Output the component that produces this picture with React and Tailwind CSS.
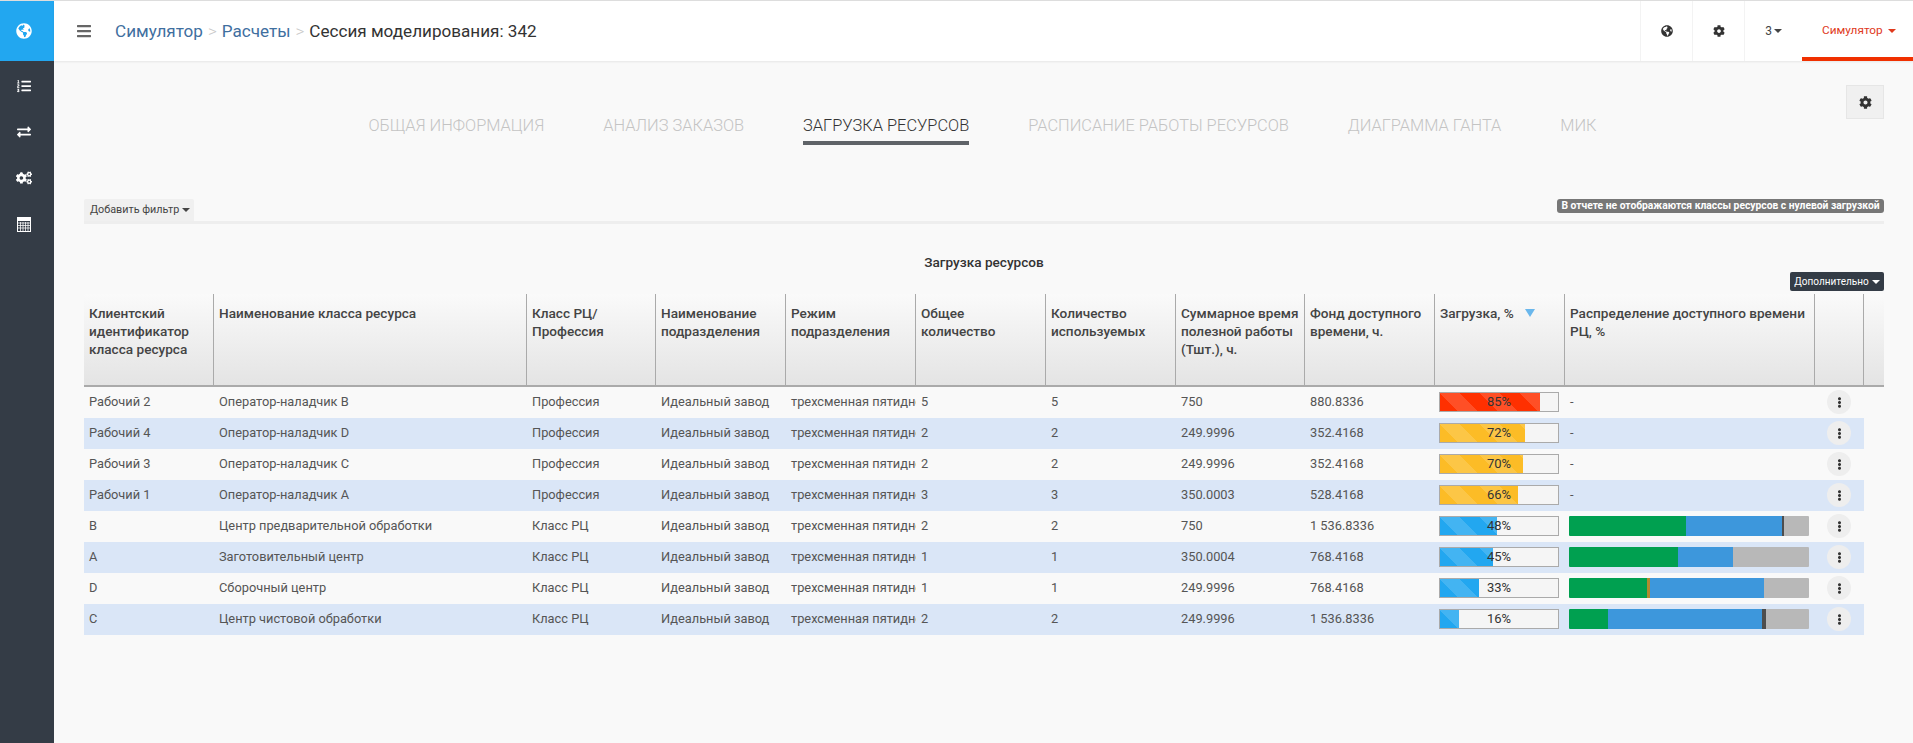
import React from 'react';
import {
  FaGlobeAmericas,
  FaListOl,
  FaExchangeAlt,
  FaCogs,
  FaCog,
  FaBars,
  FaEllipsisV,
} from 'react-icons/fa';

const tabs = [
  'ОБЩАЯ ИНФОРМАЦИЯ',
  'АНАЛИЗ ЗАКАЗОВ',
  'ЗАГРУЗКА РЕСУРСОВ',
  'РАСПИСАНИЕ РАБОТЫ РЕСУРСОВ',
  'ДИАГРАММА ГАНТА',
  'МИК',
];

const GREEN = '#00a050';
const BLUE = '#3d97dc';
const GRAY = '#b8b8b8';
const DARK = '#4d4d4d';
const ORANGE = '#b08a30';

const rows = [
  { id: 'Рабочий 2', name: 'Оператор-наладчик B', type: 'Профессия', qty: '5', used: '5', time: '750', fund: '880.8336', load: 85, color: 'bg-[#ff3000]' },
  { id: 'Рабочий 4', name: 'Оператор-наладчик D', type: 'Профессия', qty: '2', used: '2', time: '249.9996', fund: '352.4168', load: 72, color: 'bg-[#fcbc26]' },
  { id: 'Рабочий 3', name: 'Оператор-наладчик C', type: 'Профессия', qty: '2', used: '2', time: '249.9996', fund: '352.4168', load: 70, color: 'bg-[#fcbc26]' },
  { id: 'Рабочий 1', name: 'Оператор-наладчик A', type: 'Профессия', qty: '3', used: '3', time: '350.0003', fund: '528.4168', load: 66, color: 'bg-[#fcbc26]' },
  {
    id: 'B', name: 'Центр предварительной обработки', type: 'Класс РЦ', qty: '2', used: '2', time: '750', fund: '1 536.8336', load: 48, color: 'bg-[#22a7f0]',
    dist: [[117, GREEN], [96, BLUE], [2, DARK], [25, GRAY]],
  },
  {
    id: 'A', name: 'Заготовительный центр', type: 'Класс РЦ', qty: '1', used: '1', time: '350.0004', fund: '768.4168', load: 45, color: 'bg-[#22a7f0]',
    dist: [[109, GREEN], [55, BLUE], [76, GRAY]],
  },
  {
    id: 'D', name: 'Сборочный центр', type: 'Класс РЦ', qty: '1', used: '1', time: '249.9996', fund: '768.4168', load: 33, color: 'bg-[#22a7f0]',
    dist: [[78, GREEN], [3, ORANGE], [114, BLUE], [45, GRAY]],
  },
  {
    id: 'C', name: 'Центр чистовой обработки', type: 'Класс РЦ', qty: '2', used: '2', time: '249.9996', fund: '1 536.8336', load: 16, color: 'bg-[#22a7f0]',
    dist: [[39, GREEN], [154, BLUE], [4, DARK], [43, GRAY]],
  },
];

function Caret({ className = '' }) {
  return <span className={`inline-block shrink-0 w-0 h-0 border-x-4 border-t-4 border-x-transparent border-t-current ${className}`} />;
}

// outlined calculator, the solid one from the icon pack looks different
function CalculatorIcon() {
  return (
    <svg width="14" height="15" viewBox="0 0 14 15" fill="none">
      <rect x="0.5" y="0.5" width="13" height="14" stroke="#fff" />
      <rect x="1" y="1" width="12" height="3" fill="#fff" />
      <path d="M1 6h12M1 8.5h12M1 11h12M3.5 5v9M6 5v9M8.5 5v9M11 5v9" stroke="#fff" strokeWidth="1" strokeOpacity="0.75" />
    </svg>
  );
}

function LoadBar({ value, color }) {
  return (
    <div className="relative h-5 w-[120px] ml-[4px] border border-[#aaaaaa] bg-[#f5f5f5]">
      <div
        className={`h-full ${color} bg-[linear-gradient(45deg,rgba(255,255,255,.15)_25%,transparent_25%,transparent_50%,rgba(255,255,255,.15)_50%,rgba(255,255,255,.15)_75%,transparent_75%,transparent)] bg-[length:40px_40px]`}
        style={{ width: `${value}%` }}
      />
      <span className="absolute inset-0 flex items-center justify-center text-[13px] text-[#333333]">{value}%</span>
    </div>
  );
}

function DistBar({ parts }) {
  return (
    <div className="flex h-5 w-[240px] ml-[4px] overflow-hidden rounded-[1px]">
      {parts.map(([w, c], i) => (
        <div key={i} style={{ width: w, backgroundColor: c }} />
      ))}
    </div>
  );
}

function Th({ children }) {
  return (
    <th className="pl-[5px] pr-1 pt-[10px] align-top text-left text-[13.6px] leading-[18px] font-medium text-[#444444] border-r border-b-2 border-r-[#aaaaaa] border-b-[#aaaaaa] bg-gradient-to-b from-[#fafafa] to-[#e4e4e4]">
      {children}
    </th>
  );
}

function Td({ children, className = '' }) {
  return <td className={`pl-[5px] pb-px overflow-hidden whitespace-nowrap text-[12.8px] text-[#555555] ${className}`}>{children}</td>;
}

export default function App() {
  return (
    <div className="flex h-screen overflow-hidden border-t border-[#dddddd] bg-[#f9f9f9] font-['Roboto',sans-serif]">
      <aside className="w-[54px] shrink-0 flex flex-col bg-[#343c46] text-white">
        <div className="h-[60px] bg-[#22a7f0] flex items-center pl-4">
          <FaGlobeAmericas size={16} />
        </div>
        <nav className="flex flex-col pt-[2px] pl-[17px]">
          <a className="h-[46px] flex items-center"><FaListOl size={14} /></a>
          <a className="h-[46px] flex items-center"><FaExchangeAlt size={14} /></a>
          <a className="h-[46px] flex items-center -ml-px"><FaCogs size={16} /></a>
          <a className="h-[46px] flex items-center"><CalculatorIcon /></a>
        </nav>
      </aside>

      <div className="flex-1 min-w-0 flex flex-col">
        <header className="h-[60px] shrink-0 flex items-center bg-white shadow-[0_1px_2px_rgba(0,0,0,0.08)]">
          <button className="ml-[22px] text-[#666666]" aria-label="Меню">
            <FaBars size={16} />
          </button>
          <div className="ml-[23px] pt-[2px] flex items-center gap-[5px] text-[17.1px] text-[#333333]">
            <a className="text-[#3f6f9f]">Симулятор</a>
            <span className="text-[#c8c8c8] font-light">&gt;</span>
            <a className="text-[#3f6f9f]">Расчеты</a>
            <span className="text-[#c8c8c8] font-light">&gt;</span>
            <span>Сессия моделирования: 342</span>
          </div>
          <div className="ml-auto flex h-full text-[12px] text-[#444444]">
            <div className="w-[52px] flex items-center justify-center border-l border-[#f3f3f3]"><FaGlobeAmericas size={12} className="text-[#333333]" /></div>
            <div className="w-[52px] flex items-center justify-center border-l border-[#f3f3f3]"><FaCog size={12} className="text-[#333333]" /></div>
            <div className="w-[58px] flex items-center justify-center gap-[2px] border-l border-[#f3f3f3]">3<Caret /></div>
            <div className="w-[111px] flex items-center pl-[20px] pt-[4px] gap-[5px] border-b-4 border-b-[#f03000] text-[11.8px] text-[#e0391c]">
              Симулятор<Caret />
            </div>
          </div>
        </header>

        <main className="flex-1 pl-[30px] pr-[29px] pt-[24px]">
          <div className="flex justify-end">
            <button className="w-[38px] h-[34px] flex items-center justify-center bg-[#f0f0f0] border border-[#e6e6e6] text-[#333333]" aria-label="Настройки">
              <FaCog size={13} />
            </button>
          </div>

          <div className="flex justify-center gap-[59px] pr-[3px]">
            {tabs.map((t) => (
              <a
                key={t}
                className={`text-[16.4px] leading-[14px] font-light pb-[8px] border-b-4 ${t === 'ЗАГРУЗКА РЕСУРСОВ' ? 'text-[#333333] border-[#5f6368]' : 'text-[#c4c4c4] border-transparent'}`}
              >
                {t}
              </a>
            ))}
          </div>

          <div className="mt-[54px] flex justify-between items-start h-[25px] border-b-[3px] border-[#eeeeee]">
            <button className="h-[22px] w-[110px] flex items-center pl-[6px] gap-[3px] bg-[#f0f0f0] rounded-t-[2px] text-[10.8px] text-[#444444] whitespace-nowrap">
              Добавить фильтр<Caret />
            </button>
            <span className="h-[14px] w-[327px] flex items-center justify-center rounded-[3px] bg-[#777777] text-[10.3px] font-bold text-white whitespace-nowrap">
              В отчете не отображаются классы ресурсов с нулевой загрузкой
            </span>
          </div>

          <h2 className="mt-[29px] text-center text-[13.6px] leading-[18px] font-medium text-[#333333]">Загрузка ресурсов</h2>

          <div className="mt-[1px] mb-[3px] flex justify-end">
            <button className="h-[19px] w-[94px] flex items-center justify-center gap-[3px] rounded-[2px] bg-[#343c46] text-[10px] text-white whitespace-nowrap">
              Дополнительно<Caret />
            </button>
          </div>

          <table className="table-fixed w-[1800px] border-separate border-spacing-0">
            <colgroup>
              <col className="w-[130px]" />
              <col className="w-[313px]" />
              <col className="w-[129px]" />
              <col className="w-[130px]" />
              <col className="w-[130px]" />
              <col className="w-[130px]" />
              <col className="w-[130px]" />
              <col className="w-[129px]" />
              <col className="w-[130px]" />
              <col className="w-[130px]" />
              <col className="w-[250px]" />
              <col className="w-[49px]" />
              <col className="w-[20px]" />
            </colgroup>
            <thead>
              <tr className="h-[93px]">
                <Th>Клиентский идентификатор класса ресурса</Th>
                <Th>Наименование класса ресурса</Th>
                <Th>Класс РЦ/ Профессия</Th>
                <Th>Наименование подразделения</Th>
                <Th>Режим подразделения</Th>
                <Th>Общее количество</Th>
                <Th>Количество используемых</Th>
                <Th>Суммарное время полезной работы (Тшт.), ч.</Th>
                <Th>Фонд доступного времени, ч.</Th>
                <Th>
                  <span className="flex items-center gap-[11px]">
                    Загрузка, %
                    <span className="w-0 h-0 border-x-[5px] border-t-[8px] border-x-transparent border-t-[#6ab7ec]" />
                  </span>
                </Th>
                <Th>Распределение доступного времени РЦ, %</Th>
                <Th />
                <th className="border-b-2 border-b-[#aaaaaa] bg-gradient-to-b from-[#fafafa] to-[#e4e4e4]" />
              </tr>
            </thead>
            <tbody>
              {rows.map((r, i) => {
                const bg = i % 2 === 1 ? 'bg-[#dae6f7]' : '';
                return (
                  <tr key={r.id} className="h-[31px]">
                    <Td className={bg}>{r.id}</Td>
                    <Td className={bg}>{r.name}</Td>
                    <Td className={bg}>{r.type}</Td>
                    <Td className={bg}>Идеальный завод</Td>
                    <Td className={bg}>трехсменная пятидневка</Td>
                    <Td className={bg}>{r.qty}</Td>
                    <Td className={bg}>{r.used}</Td>
                    <Td className={bg}>{r.time}</Td>
                    <Td className={bg}>{r.fund}</Td>
                    <td className={`pb-px ${bg}`}><LoadBar value={r.load} color={r.color} /></td>
                    <Td className={`!pl-0 ${bg}`}>
                      {r.dist ? <DistBar parts={r.dist} /> : <span className="ml-[5px]">-</span>}
                    </Td>
                    <td className={`pb-px ${bg}`}>
                      <button className="ml-[12px] w-6 h-6 flex items-center justify-center rounded-full bg-[#eeeeee] text-[#333333]" aria-label="Действия">
                        <FaEllipsisV size={11} />
                      </button>
                    </td>
                    <td />
                  </tr>
                );
              })}
            </tbody>
          </table>
        </main>
      </div>
    </div>
  );
}
